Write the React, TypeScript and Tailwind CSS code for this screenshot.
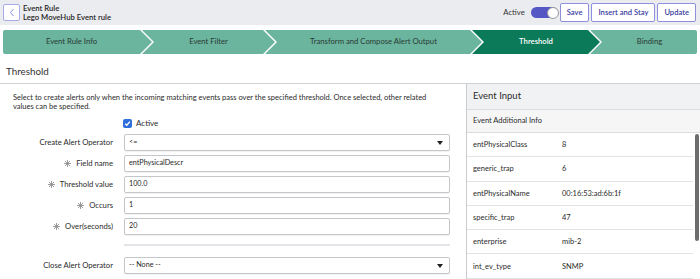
import React from "react";

function Asterisk() {
  return (
    <svg width="7" height="7" viewBox="0 0 10 10" className="mr-[5px] shrink-0">
      <g stroke="#8a8a8a" strokeWidth="1.2" strokeLinecap="round">
        <line x1="5" y1="0.5" x2="5" y2="9.5" />
        <line x1="0.5" y1="5" x2="9.5" y2="5" />
        <line x1="1.8" y1="1.8" x2="8.2" y2="8.2" />
        <line x1="8.2" y1="1.8" x2="1.8" y2="8.2" />
      </g>
    </svg>
  );
}

function Caret() {
  return (
    <svg width="6" height="4" viewBox="0 0 6 4" className="ml-auto mr-[6px]">
      <path d="M0 0 L6 0 L3 4 Z" fill="#222" />
    </svg>
  );
}

function Row({ label, req, value, select }: { label: string; req?: boolean; value: string; select?: boolean }) {
  return (
    <div className="flex items-center h-[17px]">
      <div className="w-[113px] shrink-0 flex items-center justify-end text-[7.7px] text-[#2b2b2b]">
        {req && <Asterisk />}
        <span>{label}</span>
      </div>
      <div className="ml-[11px] w-[326px] h-[17px] border border-[#c4c6ca] rounded-[2px] bg-white flex items-center pl-[4px] text-[7.2px] text-[#1f1f1f] shadow-[0_1px_1px_rgba(0,0,0,0.06)]">
        <span>{value}</span>
        {select && <Caret />}
      </div>
    </div>
  );
}

const rows: [string, string][] = [
  ["entPhysicalClass", "8"],
  ["generic_trap", "6"],
  ["entPhysicalName", "00:16:53:ad:6b:1f"],
  ["specific_trap", "47"],
  ["enterprise", "mib-2"],
  ["int_ev_type", "SNMP"],
];

export default function App() {
  return (
    <div className="w-[700px] h-[279px] overflow-hidden bg-white text-[#2e2e2e] font-[Lato,'Noto_Sans',sans-serif]">
      {/* header */}
      <div className="h-[25px] bg-[#ebecef] flex items-center pl-[3px] pr-[4px]">
        <div className="w-[17px] h-[17px] border border-[#a9abe8] rounded-[2px] bg-white flex items-center justify-center">
          <svg width="8" height="9" viewBox="0 0 8 9">
            <path d="M5.5 1 L2.5 4.5 L5.5 8" stroke="#8d90e0" strokeWidth="1" fill="none" />
          </svg>
        </div>
        <div className="ml-[3px] flex flex-col text-[7.7px] leading-[8.5px] font-semibold text-[#1f1f1f]">
          <span>Event Rule</span>
          <span>Lego MoveHub Event rule</span>
        </div>
        <div className="ml-auto flex items-center">
          <span className="text-[7.7px] text-[#333] mr-[6px]">Active</span>
          <div className="w-[27px] h-[11px] rounded-full bg-[#5557c4] flex items-center justify-end">
            <div className="w-[12px] h-[12px] rounded-full bg-white border border-[#9a9a9a] -mr-[1px]" />
          </div>
          <div className="flex items-center gap-[2px] ml-[2px]">
            <button className="h-[19px] px-[6px] border border-[#8e90de] rounded-[2px] bg-white text-[7.6px] font-semibold text-[#3a3da0]">Save</button>
            <button className="h-[19px] px-[6px] border border-[#8e90de] rounded-[2px] bg-white text-[7.6px] font-semibold text-[#3a3da0]">Insert and Stay</button>
            <button className="h-[19px] px-[6px] border border-[#8e90de] rounded-[2px] bg-white text-[7.6px] font-semibold text-[#3a3da0]">Update</button>
          </div>
        </div>
      </div>

      {/* stepper */}
      <div className="mt-[5px] mx-[3px] h-[24px] flex text-[7.7px]">
        <div className="w-[149px] shrink-0 h-full bg-[#6bb49d] rounded-l-[2px] flex items-center justify-center pr-[12px] text-[#2a3b35] [clip-path:polygon(0_0,calc(100%_-_12px)_0,100%_50%,calc(100%_-_12px)_100%,0_100%)]">
          Event Rule Info
        </div>
        <div className="w-[133px] shrink-0 -ml-[10px] h-full bg-[#6bb49d] flex items-center justify-center pl-[12px] pr-[12px] text-[#2a3b35] [clip-path:polygon(0_0,calc(100%_-_12px)_0,100%_50%,calc(100%_-_12px)_100%,0_100%,12px_50%)]">
          Event Filter
        </div>
        <div className="w-[217px] shrink-0 -ml-[10px] h-full bg-[#6bb49d] flex items-center justify-center pl-[12px] pr-[12px] text-[#2a3b35] [clip-path:polygon(0_0,calc(100%_-_12px)_0,100%_50%,calc(100%_-_12px)_100%,0_100%,12px_50%)]">
          Transform and Compose Alert Output
        </div>
        <div className="w-[128px] shrink-0 -ml-[10px] h-full bg-[#0b7a58] flex items-center justify-center pl-[12px] pr-[12px] text-white font-semibold [clip-path:polygon(0_0,calc(100%_-_12px)_0,100%_50%,calc(100%_-_12px)_100%,0_100%,12px_50%)]">
          Threshold
        </div>
        <div className="flex-1 -ml-[10px] h-full bg-[#6bb49d] rounded-r-[2px] flex items-center justify-center pl-[12px] text-[#2a3b35] [clip-path:polygon(0_0,100%_0,100%_100%,0_100%,12px_50%)]">
          Binding
        </div>
      </div>

      {/* section heading */}
      <div className="h-[30px] pt-[11px] pl-[6px] text-[9.8px] leading-[13px] text-[#333] border-b border-[#cfd1d4]">
        Threshold
      </div>

      {/* body */}
      <div className="flex h-[195px]">
        <div className="w-[466px] shrink-0 pt-[9px]">
          <p className="pl-[13px] pr-[20px] text-[7.5px] leading-[9px] text-[#2b2b2b]">
            Select to create alerts only when the incoming matching events pass over the specified threshold. Once selected, other related values can be specified.
          </p>
          <div className="mt-[6px] h-[12px] flex items-center pl-[123px]">
            <div className="w-[9px] h-[9px] rounded-[2px] bg-[#2f6fdc] flex items-center justify-center">
              <svg width="7" height="7" viewBox="0 0 8 8">
                <path d="M1.3 4.2 L3.2 6 L6.7 1.8" stroke="white" strokeWidth="1.5" fill="none" />
              </svg>
            </div>
            <span className="ml-[4px] text-[8px] text-[#2b2b2b]">Active</span>
          </div>
          <div className="mt-[5px] flex flex-col gap-[4px]">
            <Row label="Create Alert Operator" value="<=" select />
            <Row label="Field name" req value="entPhysicalDescr" />
            <Row label="Threshold value" req value="100.0" />
            <Row label="Occurs" req value="1" />
            <Row label="Over(seconds)" req value="20" />
          </div>
          <div className="mt-[9px] ml-[124px] w-[326px] h-[2px] bg-[#e3e5e8]" />
          <div className="mt-[11px]">
            <Row label="Close Alert Operator" value="-- None --" select />
          </div>
        </div>

        <div className="flex-1 border-l border-[#c9cbcf] flex flex-col">
          <div className="h-[26px] shrink-0 bg-[#f1f2f4] border-b border-[#dcdde0] flex items-center pl-[6px] text-[9.5px] text-[#2b2b2b]">
            Event Input
          </div>
          <div className="h-[23px] shrink-0 bg-[#f6f6f7] border-b border-[#dcdde0] flex items-center pl-[6px] text-[7.5px] text-[#2b2b2b]">
            Event Additional Info
          </div>
          <div className="flex flex-1">
            <div className="flex-1 flex flex-col">
              {rows.map(([k, v]) => (
                <div key={k} className="h-[24.3px] shrink-0 border-b border-[#e2e3e6] flex items-center text-[7.5px] text-[#2b2b2b]">
                  <span className="w-[95px] pl-[6px] shrink-0">{k}</span>
                  <span>{v}</span>
                </div>
              ))}
            </div>
            <div className="w-[7px] shrink-0 pt-[1px] pl-[2px]">
              <div className="w-[4px] h-[107px] rounded-full bg-[#6d6d6f]" />
            </div>
          </div>
        </div>
      </div>
    </div>
  );
}
